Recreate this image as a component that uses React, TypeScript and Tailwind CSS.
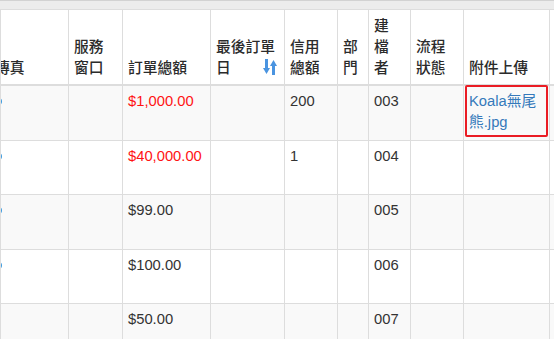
import React from "react";

const COLS = "grid grid-cols-[79px_54px_88px_74px_53px_31px_42px_53px_86px_140px]";
const CELL = "border-r border-[#dddddd] px-[5px] py-[5px] leading-[21px] overflow-hidden";

function SortIcon() {
  return (
    <svg width="14" height="16" viewBox="0 0 14 16" className="mb-[4px] shrink-0">
      <g fill="#4a94e0">
        <rect x="2" y="0" width="3" height="10" />
        <polygon points="0,9 7,9 3.5,15" />
        <rect x="9" y="6" width="3" height="10" />
        <polygon points="7,7 14,7 10.5,1" />
      </g>
    </svg>
  );
}

type Row = {
  dot: boolean;
  amount: string;
  red: boolean;
  credit: string;
  creator: string;
  file?: boolean;
  h: string;
  striped: boolean;
};

const rows: Row[] = [
  { dot: true, amount: "$1,000.00", red: true, credit: "200", creator: "003", file: true, h: "h-[55px]", striped: true },
  { dot: true, amount: "$40,000.00", red: true, credit: "1", creator: "004", h: "h-[54px]", striped: false },
  { dot: true, amount: "$99.00", red: false, credit: "", creator: "005", h: "h-[55px]", striped: true },
  { dot: true, amount: "$100.00", red: false, credit: "", creator: "006", h: "h-[54px]", striped: false },
  { dot: false, amount: "$50.00", red: false, credit: "", creator: "007", h: "h-[54px]", striped: true },
];

function Lines({ lines }: { lines: string[] }) {
  return (
    <>
      {lines.map((l, i) => (
        <div key={i}>{l}</div>
      ))}
    </>
  );
}

export default function App() {
  const th = CELL + " flex flex-col justify-end font-medium text-[#2b2b2b]";
  return (
    <div className="w-[554px] h-[339px] overflow-hidden bg-white text-[#333333] text-[14.75px] font-['Liberation_Sans','Noto_Sans_CJK_TC',sans-serif]">
      <div className="h-[9px] bg-[#ececec] border-t border-[#d2d2d2]" />
      <div className="border-t border-l border-[#dddddd] overflow-hidden">
        <div className="ml-[-11px] w-[700px]">
          {/* header */}
          <div className={COLS + " h-[76px] border-b-2 border-[#dddddd] bg-white"}>
            <div className={th}>
              <div className="whitespace-nowrap">傳真</div>
            </div>
            <div className={th}>
              <Lines lines={["服務", "窗口"]} />
            </div>
            <div className={th}>
              <div className="whitespace-nowrap">訂單總額</div>
            </div>
            <div className={th}>
              <div className="whitespace-nowrap">最後訂單</div>
              <div className="flex items-end justify-between pr-[2px]">
                <span>日</span>
                <SortIcon />
              </div>
            </div>
            <div className={th}>
              <Lines lines={["信用", "總額"]} />
            </div>
            <div className={th}>
              <Lines lines={["部", "門"]} />
            </div>
            <div className={th}>
              <Lines lines={["建", "檔", "者"]} />
            </div>
            <div className={th}>
              <Lines lines={["流程", "狀態"]} />
            </div>
            <div className={th}>
              <div className="whitespace-nowrap">附件上傳</div>
            </div>
            <div className={th} />
          </div>
          {/* body */}
          {rows.map((r, i) => (
            <div
              key={i}
              className={
                COLS +
                " border-b border-[#dddddd] " +
                r.h +
                (r.striped ? " bg-[#f9f9f9]" : " bg-white")
              }
            >
              <div className={CELL}>
                {r.dot && <div className="mt-[7px] w-[7px] h-[7px] rounded-full bg-[#3d9be0]" />}
              </div>
              <div className={CELL} />
              <div className={CELL + " whitespace-nowrap " + (r.red ? "text-[#ff1414]" : "")}>{r.amount}</div>
              <div className={CELL} />
              <div className={CELL}>{r.credit}</div>
              <div className={CELL} />
              <div className={CELL}>{r.creator}</div>
              <div className={CELL} />
              <div className={CELL + " relative overflow-visible"}>
                {r.file && (
                  <>
                    <a className="text-[#3579bb]">Koala無尾熊.jpg</a>
                    <div className="absolute left-[1px] top-[-1px] w-[83px] h-[52px] border-2 border-[#ea1c24] rounded-[2px]" />
                  </>
                )}
              </div>
              <div className={CELL} />
            </div>
          ))}
        </div>
      </div>
    </div>
  );
}
